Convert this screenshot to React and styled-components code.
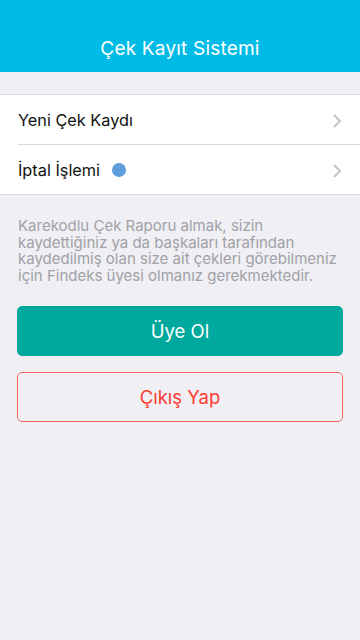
import React from "react"
import styled, { createGlobalStyle } from "styled-components"

const colors = {
  header: "#00bbe6",
  page: "#efeff4",
  line: "#d9d9de",
  text: "#111",
  muted: "#a1a1a6",
  teal: "#00a99d",
  red: "#ff3b30",
  dot: "#5e9fdb",
  chevron: "#c4c4c9",
}

const GlobalStyle = createGlobalStyle`
  html, body {
    margin: 0;
    padding: 0;
    background: ${colors.page};
  }
  body {
    font-family: Inter, "Noto Sans", sans-serif;
    -webkit-font-smoothing: antialiased;
  }
`

const Screen = styled.div`
  width: 360px;
  min-height: 640px;
  background: ${colors.page};
`

const Header = styled.header`
  height: 72px;
  padding-top: 24px;
  box-sizing: border-box;
  background: ${colors.header};
  display: flex;
  align-items: center;
  justify-content: center;
`

const Title = styled.h1`
  margin: 0;
  color: #fff;
  font-size: 19px;
  font-weight: 400;
  letter-spacing: 0.2px;
`

const List = styled.ul`
  list-style: none;
  margin: 22px 0 0;
  padding: 0;
  background: #fff;
  border-top: 1px solid ${colors.line};
  border-bottom: 1px solid ${colors.line};
`

const Row = styled.li`
  height: 49px;
  display: flex;
  align-items: center;
  padding: 0 18px 0 18px;
  font-size: 16.3px;
  color: ${colors.text};
  & + & {
    border-top: 1px solid ${colors.line};
    margin-left: 18px;
    padding-left: 0;
  }
`

const Label = styled.span`
  flex: 1;
  display: flex;
  align-items: center;
  gap: 12px;
`

const Dot = styled.span`
  width: 14px;
  height: 14px;
  border-radius: 50%;
  background: ${colors.dot};
`

const Chevron = () => (
  <svg width="9" height="14" viewBox="0 0 9 14" style={{ marginTop: 3 }}>
    <path d="M1.5 1.5 L7 7 L1.5 12.5" fill="none" stroke={colors.chevron} strokeWidth="2" strokeLinecap="round" strokeLinejoin="round" />
  </svg>
)

const Info = styled.p`
  margin: 23px 18px 0;
  font-size: 15px;
  line-height: 16.7px;
  color: ${colors.muted};
`

const Actions = styled.div`
  margin: 21px 17px 0;
  display: flex;
  flex-direction: column;
  gap: 16px;
`

const Button = styled.button`
  height: 50px;
  border-radius: 5px;
  font-family: inherit;
  font-size: 18.5px;
  font-weight: 400;
  cursor: pointer;
  border: 1.5px solid ${(p) => (p.$outline ? "#f7675f" : colors.teal)};
  background: ${(p) => (p.$outline ? "transparent" : colors.teal)};
  color: ${(p) => (p.$outline ? colors.red : "#fff")};
`

const App = () => {
  return (
    <Screen>
      <GlobalStyle />
      <Header>
        <Title>Çek Kayıt Sistemi</Title>
      </Header>
      <List>
        <Row>
          <Label>Yeni Çek Kaydı</Label>
          <Chevron />
        </Row>
        <Row>
          <Label>
            İptal İşlemi <Dot />
          </Label>
          <Chevron />
        </Row>
      </List>
      <Info>
        Karekodlu Çek Raporu almak, sizin kaydettiğiniz ya da başkaları tarafından kaydedilmiş olan size ait çekleri
        görebilmeniz için Findeks üyesi olmanız gerekmektedir.
      </Info>
      <Actions>
        <Button>Üye Ol</Button>
        <Button $outline>Çıkış Yap</Button>
      </Actions>
    </Screen>
  )
}

export default App
